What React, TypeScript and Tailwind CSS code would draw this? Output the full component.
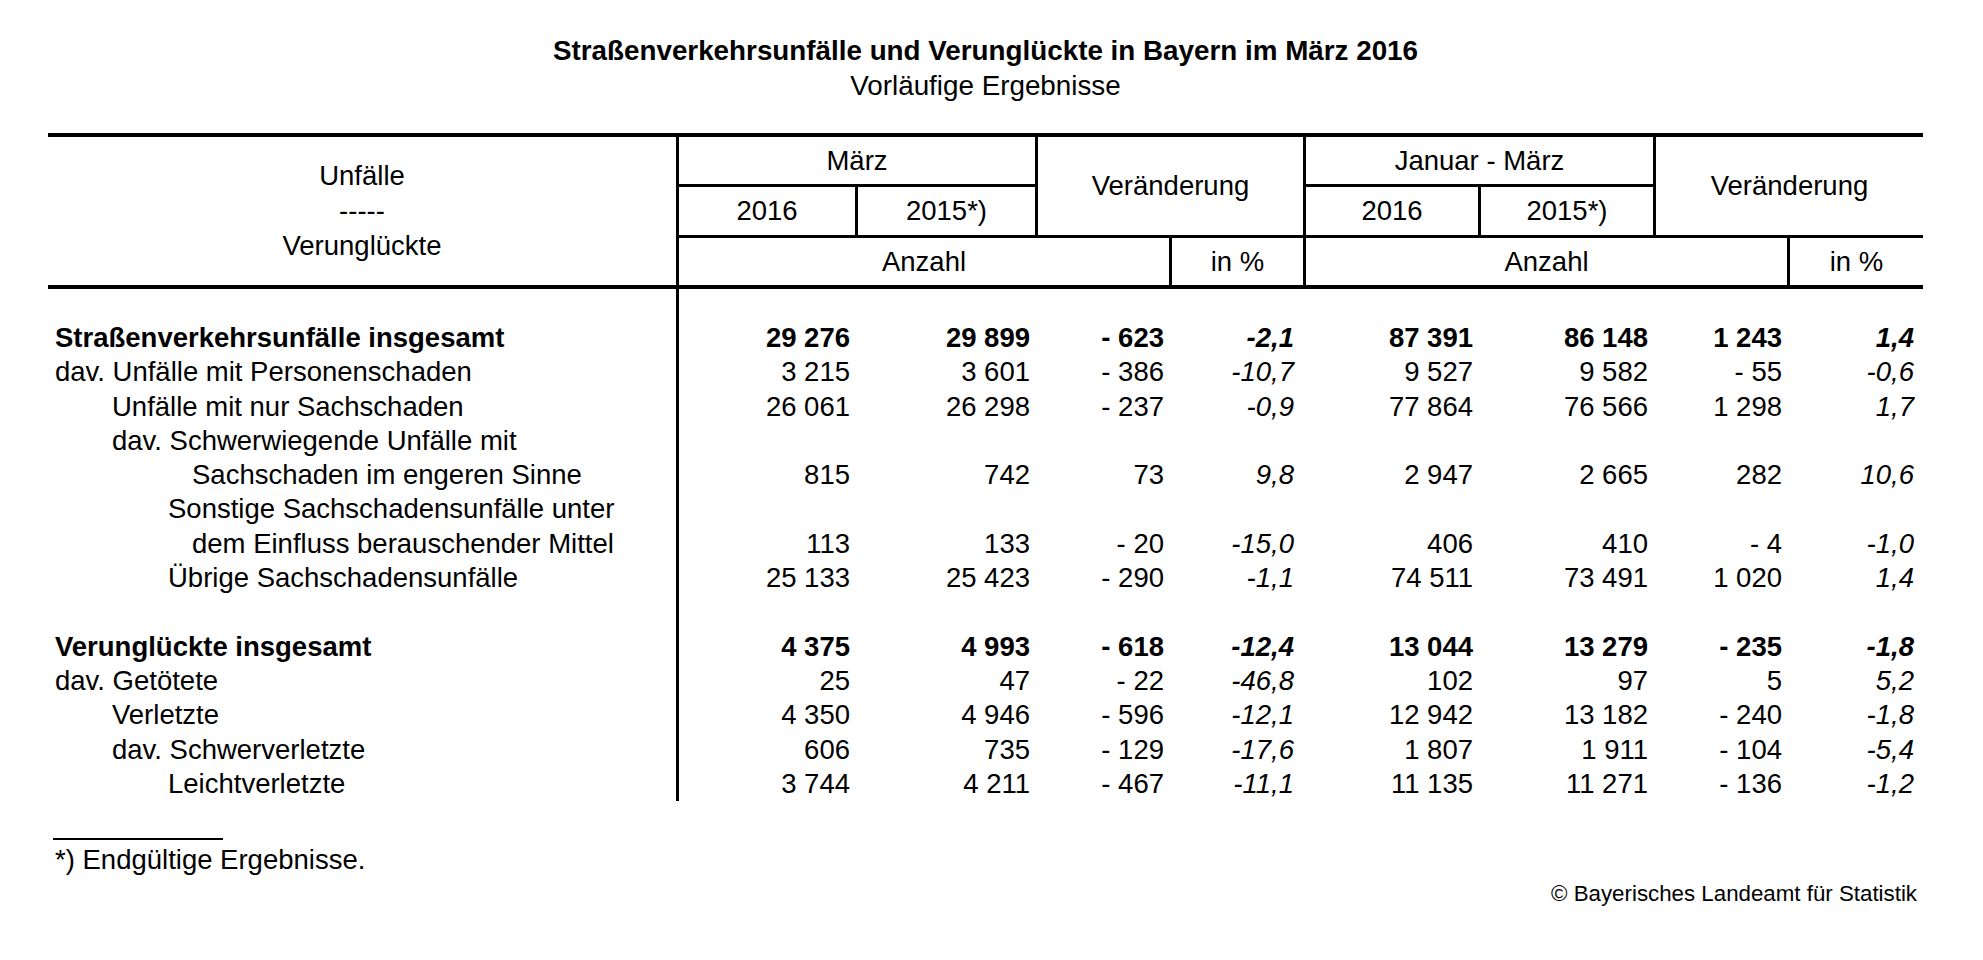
type Row = {
  label: string;
  indent: 0 | 1 | 2 | 3;
  bold?: boolean;
  values?: string[];
};

// one grid template for header and body so the column lines stay aligned
const COLS =
  "grid grid-cols-[628px_179px_180px_134px_134px_175px_175px_134px_136px]";

const indentClass = ["pl-[7px]", "pl-[64px]", "pl-[120px]", "pl-[144px]"];

const accidents: Row[] = [
  {
    label: "Straßenverkehrsunfälle insgesamt",
    indent: 0,
    bold: true,
    values: ["29 276", "29 899", "- 623", "-2,1", "87 391", "86 148", "1 243", "1,4"],
  },
  {
    label: "dav. Unfälle mit Personenschaden",
    indent: 0,
    values: ["3 215", "3 601", "- 386", "-10,7", "9 527", "9 582", "- 55", "-0,6"],
  },
  {
    label: "Unfälle mit nur Sachschaden",
    indent: 1,
    values: ["26 061", "26 298", "- 237", "-0,9", "77 864", "76 566", "1 298", "1,7"],
  },
  { label: "dav. Schwerwiegende Unfälle mit", indent: 1 },
  {
    label: "Sachschaden im engeren Sinne",
    indent: 3,
    values: ["815", "742", "73", "9,8", "2 947", "2 665", "282", "10,6"],
  },
  { label: "Sonstige Sachschadensunfälle unter", indent: 2 },
  {
    label: "dem Einfluss berauschender Mittel",
    indent: 3,
    values: ["113", "133", "- 20", "-15,0", "406", "410", "- 4", "-1,0"],
  },
  {
    label: "Übrige Sachschadensunfälle",
    indent: 2,
    values: ["25 133", "25 423", "- 290", "-1,1", "74 511", "73 491", "1 020", "1,4"],
  },
];

const casualties: Row[] = [
  {
    label: "Verunglückte insgesamt",
    indent: 0,
    bold: true,
    values: ["4 375", "4 993", "- 618", "-12,4", "13 044", "13 279", "- 235", "-1,8"],
  },
  {
    label: "dav. Getötete",
    indent: 0,
    values: ["25", "47", "- 22", "-46,8", "102", "97", "5", "5,2"],
  },
  {
    label: "Verletzte",
    indent: 1,
    values: ["4 350", "4 946", "- 596", "-12,1", "12 942", "13 182", "- 240", "-1,8"],
  },
  {
    label: "dav. Schwerverletzte",
    indent: 1,
    values: ["606", "735", "- 129", "-17,6", "1 807", "1 911", "- 104", "-5,4"],
  },
  {
    label: "Leichtverletzte",
    indent: 2,
    values: ["3 744", "4 211", "- 467", "-11,1", "11 135", "11 271", "- 136", "-1,2"],
  },
];

const BodyRow = ({ row, height = "h-[34.3px]" }: { row?: Row; height?: string }) => {
  const vals = row?.values ?? ["", "", "", "", "", "", "", ""];
  return (
    <div className={`${COLS} ${height} ${row?.bold ? "font-bold" : ""}`}>
      <div className={`flex items-center whitespace-pre ${row ? indentClass[row.indent] : ""}`}>
        {row?.label}
      </div>
      {vals.map((v, i) => {
        const pct = i === 3 || i === 7;
        return (
          <div
            key={i}
            className={`flex items-center justify-end whitespace-pre ${
              pct ? "pr-[9px] italic" : "pr-[5px]"
            } ${i === 0 ? "border-l-[3px] border-black" : ""}`}
          >
            {v}
          </div>
        );
      })}
    </div>
  );
};

const HeaderCell = ({
  className,
  children,
}: {
  className: string;
  children: React.ReactNode;
}) => (
  <div className={`flex items-center justify-center border-black ${className}`}>
    {children}
  </div>
);

export default function App() {
  return (
    <div className="min-h-screen bg-white font-['Liberation_Sans',Arial,sans-serif] text-[27.5px] text-black">
      <div className="ml-[48px] w-[1875px] pt-[33px]">
        {/* title */}
        <div className="text-center text-[27.8px] leading-[35px]">
          <div className="font-bold">
            Straßenverkehrsunfälle und Verunglückte in Bayern im März 2016
          </div>
          <div>Vorläufige Ergebnisse</div>
        </div>

        {/* header */}
        <div className={`${COLS} mt-[30px] grid-rows-[50px_51px_47px] border-y-4 border-black`}>
          <div className="col-start-1 row-span-3 row-start-1 flex flex-col items-center justify-center pb-[2px] leading-[35px]">
            <span>Unfälle</span>
            <span>-----</span>
            <span>Verunglückte</span>
          </div>
          <HeaderCell className="col-span-2 col-start-2 row-start-1 border-b-[3px] border-l-[3px]">
            März
          </HeaderCell>
          <HeaderCell className="col-span-2 col-start-4 row-span-2 row-start-1 border-b-[3px] border-l-[3px]">
            Veränderung
          </HeaderCell>
          <HeaderCell className="col-span-2 col-start-6 row-start-1 border-b-[3px] border-l-[3px]">
            Januar - März
          </HeaderCell>
          <HeaderCell className="col-span-2 col-start-8 row-span-2 row-start-1 border-b-[3px] border-l-[3px]">
            Veränderung
          </HeaderCell>

          <HeaderCell className="col-start-2 row-start-2 border-b-[3px] border-l-[3px]">2016</HeaderCell>
          <HeaderCell className="col-start-3 row-start-2 border-b-[3px] border-l-[3px]">2015*)</HeaderCell>
          <HeaderCell className="col-start-6 row-start-2 border-b-[3px] border-l-[3px]">2016</HeaderCell>
          <HeaderCell className="col-start-7 row-start-2 border-b-[3px] border-l-[3px]">2015*)</HeaderCell>

          <HeaderCell className="col-span-3 col-start-2 row-start-3 border-l-[3px]">Anzahl</HeaderCell>
          <HeaderCell className="col-start-5 row-start-3 border-l-[3px]">in %</HeaderCell>
          <HeaderCell className="col-span-3 col-start-6 row-start-3 border-l-[3px]">Anzahl</HeaderCell>
          <HeaderCell className="col-start-9 row-start-3 border-l-[3px]">in %</HeaderCell>
        </div>

        {/* body */}
        <div className="leading-[34.3px]">
          <BodyRow height="h-[32px]" />
          {accidents.map((r) => (
            <BodyRow key={r.label} row={r} />
          ))}
          <BodyRow />
          {casualties.map((r) => (
            <BodyRow key={r.label} row={r} />
          ))}
        </div>

        {/* footnote */}
        <div className="mt-[37px] ml-[5px] h-[2px] w-[170px] bg-black" />
        <div className="pl-[7px] leading-[40px]">*) Endgültige Ergebnisse.</div>
        <div className="pr-[6px] text-right text-[22.3px] leading-[28px]">
          © Bayerisches Landeamt für Statistik
        </div>
      </div>
    </div>
  );
}
